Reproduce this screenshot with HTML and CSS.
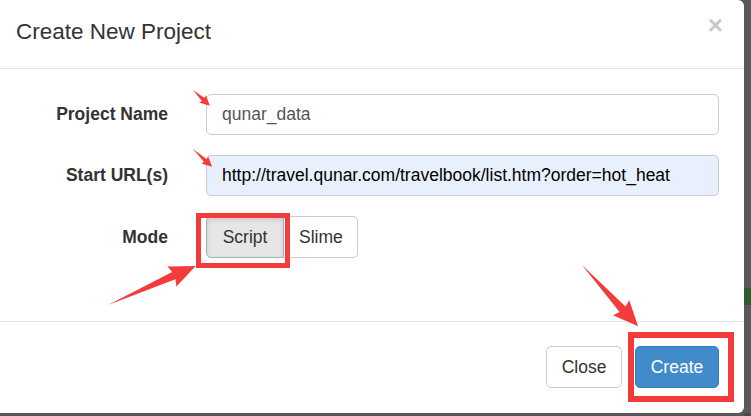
FILE: index.html
```html
<!DOCTYPE html>
<html lang="en">
<head>
  <meta charset="UTF-8">
  <title>Create New Project</title>
  <link rel="stylesheet" href="styles.css">
</head>
<body>

  <div class="modal">
    <!-- Header -->
    <div class="modal-header">
      <h4 class="modal-title">Create New Project</h4>
      <span class="close">&times;</span>
    </div>

    <!-- Form -->
    <div class="modal-body">
      <label class="label">Project Name</label>
      <input class="field" type="text" value="qunar_data">

      <label class="label">Start URL(s)</label>
      <input class="field autofill" type="text" value="http://travel.qunar.com/travelbook/list.htm?order=hot_heat">

      <label class="label">Mode</label>
      <div class="btn-group">
        <button class="btn active">Script</button>
        <button class="btn">Slime</button>
      </div>
    </div>

    <!-- Footer -->
    <div class="modal-footer">
      <button class="btn">Close</button>
      <button class="btn btn-primary">Create</button>
    </div>

    <!-- Annotations -->
    <div class="mark mark-script"></div>
    <div class="mark mark-create"></div>
    <svg class="arrows" width="745" height="413" viewBox="0 0 745 413">
      <polygon points="0,0 14,-2 13,-5 23,0 13,5 14,2" transform="translate(193,90) rotate(43)"/>
      <polygon points="0,0 17,-2 16,-5 26,0 16,5 17,2" transform="translate(193,149) rotate(43)"/>
      <polygon points="0,0 72,-4 70,-11 96,0 70,11 72,4" transform="translate(108,305) rotate(-24)"/>
      <polygon points="0,0 60,-4 58,-11 83,0 58,11 60,4" transform="translate(582,265) rotate(47.5)"/>
    </svg>
  </div>

  <div class="backdrop">
    <div class="strip"></div>
  </div>

</body>
</html>
```

FILE: styles.css
```css
body {
  margin: 0;
  display: flex;
  height: 416px;
  background-color: #585858;
  font-family: "Liberation Sans", Arial, sans-serif;
  font-size: 17.5px;
  color: #333;
  overflow: hidden;
}

.modal {
  position: relative;
  width: 744px;
  height: 413px;
  flex-shrink: 0;
  background-color: #fff;
  border-radius: 0 6px 6px 0;
  display: flex;
  flex-direction: column;
}

.modal-header {
  height: 68px;
  border-bottom: 1px solid #e5e5e5;
  display: flex;
  align-items: center;
  justify-content: space-between;
  padding: 0 21px 0 16px;
}

.modal-title {
  margin: 0;
  font-size: 22.5px;
  font-weight: normal;
  color: #333;
  padding-bottom: 4px;
}

.close {
  font-size: 26px;
  font-weight: bold;
  color: #c8c8c8;
  align-self: flex-start;
  margin-top: 10px;
}

.modal-body {
  flex: 1;
  display: grid;
  grid-template-columns: 152px 1fr;
  column-gap: 38px;
  row-gap: 20px;
  align-content: start;
  align-items: center;
  padding: 25px 25px 0 16px;
}

.label {
  text-align: right;
  font-weight: bold;
  color: #333;
}

.field {
  height: 41px;
  box-sizing: border-box;
  padding: 0 15px;
  border: 1px solid #ccc;
  border-radius: 5px;
  font-family: inherit;
  font-size: 17.5px;
  color: #555;
  background-color: #fff;
}

.field.autofill {
  background-color: #e8f0fe;
  color: #000;
}

.btn-group {
  display: flex;
}

.btn {
  height: 42px;
  padding: 0 15px;
  border: 1px solid #ccc;
  border-radius: 5px;
  background-color: #fff;
  font-family: inherit;
  font-size: 17.5px;
  color: #333;
}

.btn-group .btn:first-child {
  border-radius: 5px 0 0 5px;
  width: 78px;
}

.btn-group .btn:last-child {
  border-radius: 0 5px 5px 0;
  border-left: none;
  width: 74px;
}

.btn.active {
  background-color: #e6e6e6;
  border-color: #adadad;
  box-shadow: inset 0 3px 5px rgba(0, 0, 0, 0.125);
}

.modal-footer {
  height: 92px;
  box-sizing: border-box;
  border-top: 1px solid #e5e5e5;
  display: flex;
  justify-content: flex-end;
  align-items: flex-start;
  gap: 13px;
  padding: 24px 25px 0 0;
}

.modal-footer .btn {
  width: 76px;
  padding: 0;
}

.btn-primary {
  background-color: #428bca;
  border-color: #357ebd;
  color: #fff;
  width: 84px !important;
}

.mark {
  position: absolute;
  border: 5px solid #f33b3b;
}

.mark-script {
  left: 196px;
  top: 213px;
  width: 84px;
  height: 45px;
}

.mark-create {
  left: 628px;
  top: 332px;
  width: 94px;
  height: 58px;
  border-width: 6px;
}

.arrows {
  position: absolute;
  left: 0;
  top: 0;
  fill: #f33b3b;
  pointer-events: none;
}

.backdrop {
  flex: 1;
  height: 413px;
  border-bottom: 3px solid #4a4a4a;
}

.strip {
  margin-top: 288px;
  height: 17px;
  background-color: #2f5a2e;
}
```
